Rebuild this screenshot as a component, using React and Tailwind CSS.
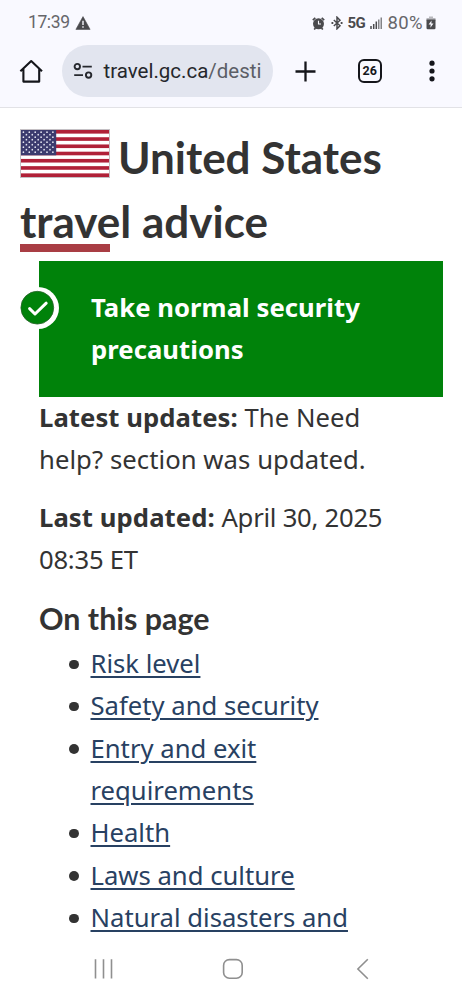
import React from "react";

function StatusBar() {
  return (
    <div className="flex h-[45px] items-center justify-between pl-[28px] pr-[26px] pt-px text-[#66666a]">
      <div className="flex items-center gap-[7px]">
        <span className="font-['Roboto',sans-serif] text-[17.5px] leading-none tracking-[-0.4px] w-[40px] whitespace-nowrap">17:39</span>
        <svg width="16" height="14" viewBox="0 0 15 14">
          <path d="M7.5 0.6 L14.6 13.4 H0.4 Z" fill="#4a4a4d" stroke="#4a4a4d" strokeWidth="0.6" strokeLinejoin="round" />
          <path d="M7.5 4.8 V9 M7.5 10.2 V11.8" stroke="#f8f8fe" strokeWidth="1.4" />
        </svg>
      </div>
      <div className="flex items-center">
        <svg className="mr-[6px]" width="13" height="13" viewBox="0 0 13 13">
          <circle cx="6.5" cy="6.8" r="5.5" fill="#4a4a4d" />
          <path d="M0.8 3.2 L3.3 0.9 M12.2 3.2 L9.7 0.9 M2.2 12.5 L3.5 11 M10.8 12.5 L9.5 11" stroke="#4a4a4d" strokeWidth="1.7" />
          <path d="M6.5 3.8 V7 H9" fill="none" stroke="#f8f8fe" strokeWidth="1.1" />
        </svg>
        <svg className="mr-[5px]" width="12" height="14" viewBox="0 0 12 14">
          <path d="M2.8 4 L9 9.7 L6 12.8 V1.2 L9 4.3 L2.8 10" fill="none" stroke="#4a4a4d" strokeWidth="1.5" />
          <path d="M0.5 7 H2.3 M9.7 7 H11.5" stroke="#4a4a4d" strokeWidth="1.8" />
        </svg>
        <span className="mr-[4px] w-[18px] whitespace-nowrap font-['Roboto',sans-serif] text-[15px] leading-[20px] font-bold tracking-[-0.5px] text-[#4a4a4d]">5G</span>
        <svg className="mr-[6px]" width="12" height="12" viewBox="0 0 12 12">
          <path d="M1 12 V9 M3.7 12 V7 M6.3 12 V4.6" stroke="#4a4a4d" strokeWidth="1.5" />
          <path d="M8.8 12 V2.6 M11.2 12 V0.5" stroke="#66666a" strokeWidth="1.2" />
        </svg>
        <span className="w-[38.5px] whitespace-nowrap font-['Roboto',sans-serif] text-[18.5px] leading-none tracking-[0.4px]">80%</span>
        <svg width="10" height="14" viewBox="0 0 10 14">
          <path d="M3 0.5 H7 V2 H9.5 V5 H0.5 V2 H3 Z" fill="#b9b9be" />
          <path d="M0.5 3.5 H9.5 V12 Q9.5 13.3 8.3 13.3 H1.7 Q0.5 13.3 0.5 12 Z" fill="#4a4a4d" />
          <path d="M5.5 4.5 L2.6 8.6 H4.7 L4.4 11.8 L7.5 7.6 H5.4 Z" fill="#f8f8fe" />
        </svg>
      </div>
    </div>
  );
}

function BrowserBar() {
  return (
    <div className="flex h-[52px] items-center pl-[19px] text-[#15161b]">
      <svg className="mr-[19px] shrink-0" width="24" height="24" viewBox="0 0 24 24" fill="none" stroke="currentColor" strokeWidth="2.1" strokeLinejoin="round">
        <path d="M1.4 12.2 L12.2 2 L23 12.2 M4.4 9.8 V22.6 H20.2 V9.8" />
      </svg>
      <div className="flex h-[52px] w-[210.5px] shrink-0 items-center rounded-full bg-[#e2e5ef] pl-[10.5px]">
        <svg className="mr-[11px] shrink-0" width="20" height="18" viewBox="0 0 20 18" fill="none" stroke="#26282e" strokeWidth="1.9">
          <circle cx="4.3" cy="4.6" r="2.7" />
          <path d="M9.5 4.6 H18.8 M1.2 13.1 H10" />
          <circle cx="15.6" cy="13.1" r="2.7" />
        </svg>
        <span className="whitespace-nowrap font-['Roboto',sans-serif] text-[20.5px] leading-[28px] text-[#25272c]">travel.gc.ca<span className="text-[#5b5e66]">/desti</span></span>
      </div>
      <svg className="ml-[22.5px] shrink-0" width="21" height="21" viewBox="0 0 21 21" stroke="currentColor" strokeWidth="2.3">
        <path d="M10.5 0.5 V20.5 M0.5 10.5 H20.5" />
      </svg>
      <div className="ml-[42px] flex h-[23.5px] w-[23.5px] shrink-0 items-center justify-center rounded-[6px] border-2 border-current font-['Roboto',sans-serif] text-[12.5px] leading-none font-bold">26</div>
      <svg className="ml-[47px] shrink-0" width="6" height="22" viewBox="0 0 6 22" fill="currentColor">
        <circle cx="3" cy="3.2" r="2.6" />
        <circle cx="3" cy="11" r="2.6" />
        <circle cx="3" cy="18.8" r="2.6" />
      </svg>
    </div>
  );
}

const starRows = Array.from({ length: 9 }, (_, r) =>
  Array.from({ length: r % 2 ? 5 : 6 }, (_, c) => [
    (r % 2 ? 6.4 : 3.4) + c * 5.9,
    3.2 + r * 2.5,
  ])
).flat();

function UsFlag() {
  return (
    <svg width="90" height="49" viewBox="0 0 90 49" className="mt-[3px] shrink-0">
      <rect width="90" height="49" fill="#c4c0c4" />
      <rect x="1" y="1" width="88" height="47" fill="#fff" />
      {[0, 1, 2, 3, 4, 5, 6].map((i) => (
        <rect key={i} x="1" y={1 + i * 7.23} width="88" height="3.62" fill="#b02138" />
      ))}
      <rect x="1" y="1" width="35.2" height="25.3" fill="#3c3b6e" />
      {starRows.map(([x, y], i) => (
        <circle key={i} cx={x} cy={y} r="0.85" fill="#e6e6f2" />
      ))}
    </svg>
  );
}

const links = [
  "Risk level",
  "Safety and security",
  "Entry and exit requirements",
  "Health",
  "Laws and culture",
  "Natural disasters and",
];

export default function App() {
  return (
    <div className="flex h-[1000px] w-[462px] flex-col overflow-hidden bg-white">
      <header className="h-[108px] shrink-0 border-b border-[#e2e2e6] bg-[#f9f9ff]">
        <StatusBar />
        <BrowserBar />
      </header>

      <main className="h-[829px] shrink-0 overflow-hidden pt-[18px] pl-[20px] font-['Noto_Sans',sans-serif] text-[25.67px] leading-[42.35px] text-[#333]">
        <h1 className="font-['Lato',sans-serif] text-[44px] leading-[63.5px] font-bold">
          <span className="flex h-[63.5px] gap-[8px] whitespace-nowrap">
            <UsFlag />
            <span>United States</span>
          </span>
          <span className="block h-[63.5px]">travel advice</span>
        </h1>
        <div className="mt-[-9px] h-[8px] w-[90px] bg-[#a93d44]" />

        <div className="pt-[9px] pl-[19px]">
          <div className="relative h-[135.5px] w-[404px] bg-[#00820a] pt-[26px] pl-[52px] font-bold text-white">
            <svg className="absolute top-[25.5px] left-[-22px]" width="42" height="42" viewBox="0 0 42 42">
              <circle cx="21" cy="21" r="21" fill="#fff" />
              <circle cx="20.3" cy="20.7" r="16.4" fill="#00820a" stroke="#28632b" strokeWidth="0.8" />
              <path d="M12.6 21.6 L18 27 L29.2 16.2" fill="none" stroke="#fff" strokeWidth="3" strokeLinecap="round" strokeLinejoin="round" />
            </svg>
            <span className="tracking-[0.05px]">Take normal security<br />precautions</span>
          </div>
          <p className="mt-[0.5px] mb-[15.2px] tracking-[0.06px]">
            <b>Latest updates:</b> The Need<br />help? section was updated.
          </p>
          <p>
            <b className="tracking-[0.08px]">Last updated:</b> <span className="tracking-[-0.25px]">April 30, 2025<br />08:35 ET</span>
          </p>
          <h2 className="mt-[17px] mb-[6.5px] font-['Lato',sans-serif] text-[30.4px] leading-[38px] font-bold">On this page</h2>
          <ul>
            {links.map((text) => (
              <li key={text} className="flex">
                <span className="mt-[16.5px] mr-[12px] ml-[30px] h-[9.5px] w-[9.5px] shrink-0 rounded-full bg-[#333]" />
                <a className="w-[290px] text-[#284162] underline decoration-[1.6px] underline-offset-[3px]">{text}</a>
              </li>
            ))}
          </ul>
        </div>
      </main>

      <nav className="flex h-[63px] shrink-0 items-center bg-white pl-[93px] text-[#8f8f8f]">
        <svg width="21" height="22" viewBox="0 0 21 22" stroke="currentColor" strokeWidth="1.6">
          <path d="M2.5 1.3 V20.5 M10.5 1.3 V20.5 M18.5 1.3 V20.5" />
        </svg>
        <svg className="ml-[108px]" width="22" height="22" viewBox="0 0 22 22" fill="none" stroke="currentColor" strokeWidth="1.6">
          <rect x="1.6" y="1.6" width="18.6" height="18.6" rx="5.8" />
        </svg>
        <svg className="ml-[112px]" width="14" height="22" viewBox="0 0 14 22" fill="none" stroke="currentColor" strokeWidth="1.6">
          <path d="M11.8 1.3 L1.9 11 L11.8 20.7" />
        </svg>
      </nav>
    </div>
  );
}
